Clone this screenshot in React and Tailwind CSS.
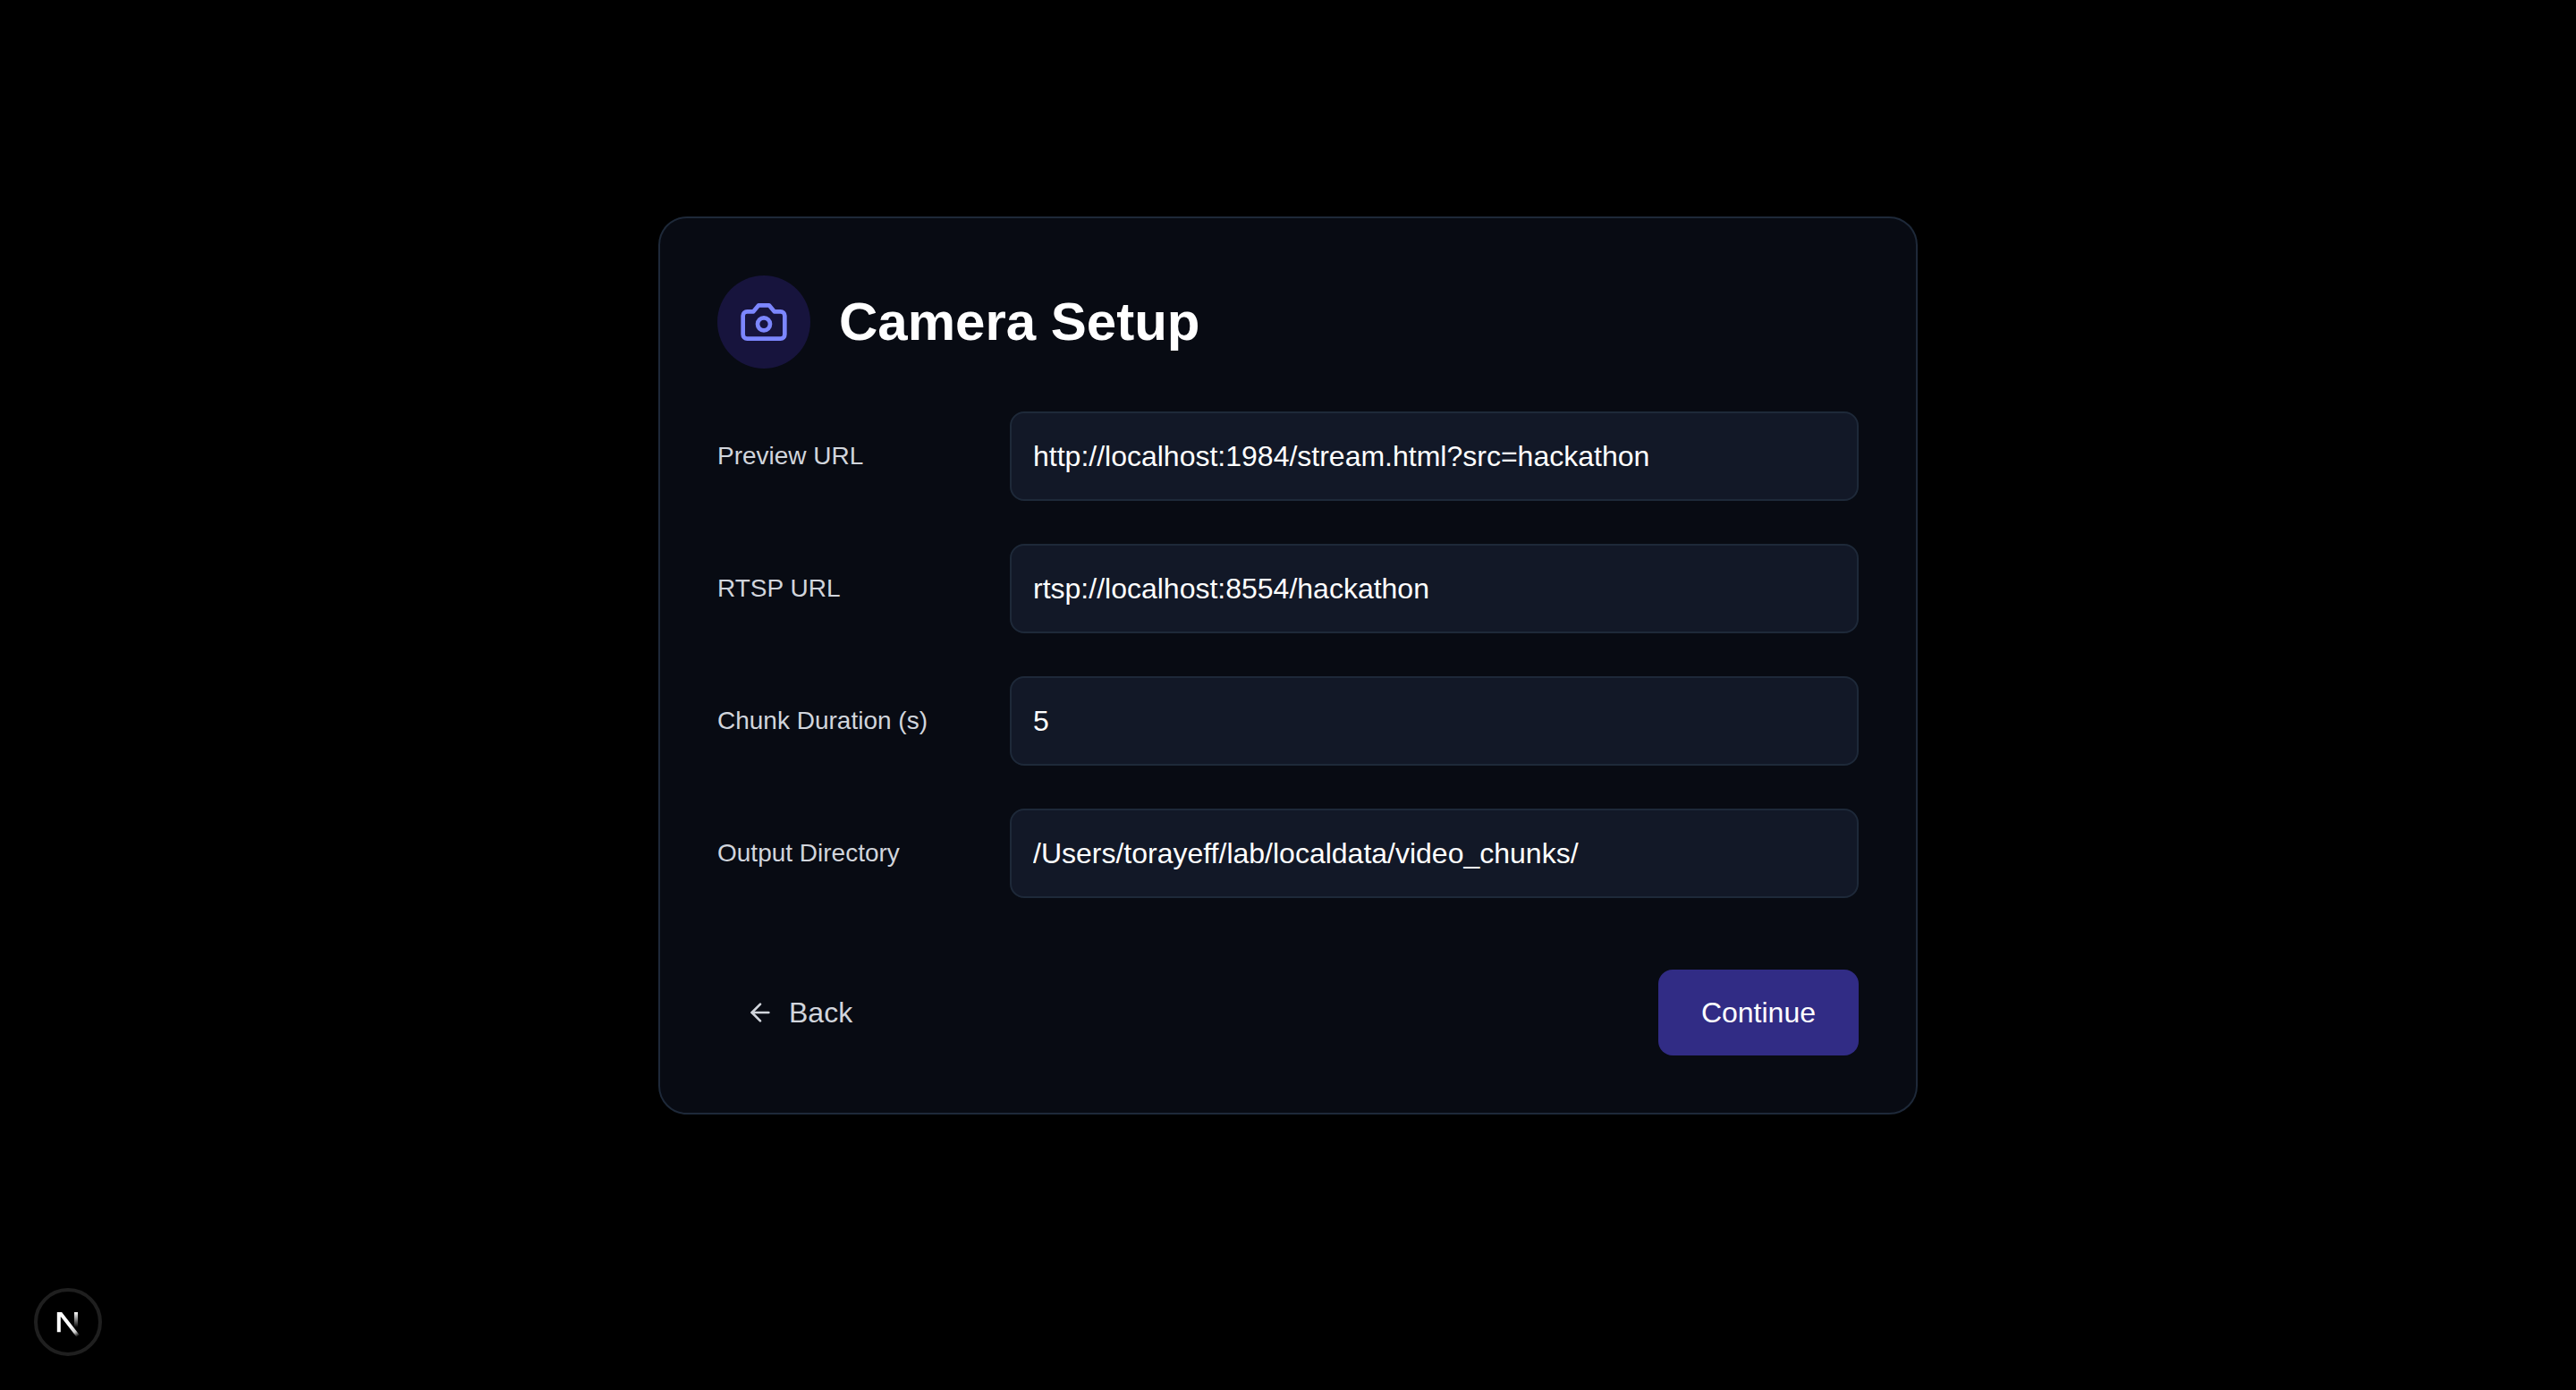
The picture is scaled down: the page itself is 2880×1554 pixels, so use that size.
import { ArrowLeft } from "lucide-react";

const fields = [
  { id: "preview-url", label: "Preview URL", value: "http://localhost:1984/stream.html?src=hackathon" },
  { id: "rtsp-url", label: "RTSP URL", value: "rtsp://localhost:8554/hackathon" },
  { id: "chunk-duration", label: "Chunk Duration (s)", value: "5" },
  { id: "output-directory", label: "Output Directory", value: "/Users/torayeff/lab/localdata/video_chunks/" },
];

function CameraIcon() {
  return (
    <svg
      className="size-14"
      viewBox="0 0 24 24"
      fill="none"
      stroke="currentColor"
      strokeWidth="2"
      strokeLinecap="round"
      strokeLinejoin="round"
      aria-hidden="true"
    >
      <path d="M14.5 4h-5L7 7H4a2 2 0 0 0-2 2v9a2 2 0 0 0 2 2h16a2 2 0 0 0 2-2V9a2 2 0 0 0-2-2h-3l-2.5-3z" />
      <circle cx="12" cy="13" r="3" />
    </svg>
  );
}

function NextMark() {
  return (
    <svg className="size-[68px]" viewBox="0 0 68 68" fill="none" aria-hidden="true">
      <defs>
        <linearGradient id="diagonal" x1="37" y1="38" x2="45" y2="50" gradientUnits="userSpaceOnUse">
          <stop stopColor="white" />
          <stop offset="0.6" stopColor="white" stopOpacity="0.8" />
          <stop offset="1" stopColor="white" stopOpacity="0" />
        </linearGradient>
        <linearGradient id="stem" x1="43" y1="23" x2="43" y2="40" gradientUnits="userSpaceOnUse">
          <stop stopColor="white" />
          <stop offset="1" stopColor="white" stopOpacity="0" />
        </linearGradient>
        <clipPath id="mark-bounds">
          <rect x="20" y="23" width="30" height="28" />
        </clipPath>
      </defs>
      <g clipPath="url(#mark-bounds)">
        <path d="M45.5 50 L23.8 22 V45.2" stroke="url(#diagonal)" strokeWidth="4" />
        <path d="M43 22 V46" stroke="url(#stem)" strokeWidth="4" />
      </g>
    </svg>
  );
}

export default function App() {
  return (
    <div className="flex min-h-screen items-center justify-center bg-black px-8 pb-[66px] font-['Liberation_Sans',Arial,sans-serif] text-white">
      <main className="w-full max-w-[1408px] rounded-[32px] border-2 border-gray-800 bg-[#080b13] p-16">
        <header className="flex items-center gap-8">
          <div className="rounded-full bg-[#17143d] p-6 text-indigo-400">
            <CameraIcon />
          </div>
          <h1 className="text-[60px] leading-[72px] font-bold">Camera Setup</h1>
        </header>

        <form className="mt-12" onSubmit={(e) => e.preventDefault()}>
          <div className="space-y-12">
            {fields.map((f) => (
              <div key={f.id} className="grid grid-cols-4 items-center gap-8">
                <label htmlFor={f.id} className="text-[28px] leading-10 text-gray-300">
                  {f.label}
                </label>
                <input
                  id={f.id}
                  type="text"
                  defaultValue={f.value}
                  className="col-span-3 h-[100px] w-full rounded-2xl border-2 border-gray-800 bg-[#121827] px-6 text-[32px] leading-[48px] text-white outline-none"
                />
              </div>
            ))}
          </div>

          <div className="mt-20 flex items-center justify-between">
            <button type="button" className="flex items-center gap-4 rounded-2xl px-8 py-6 text-[32px] leading-[48px] text-gray-300">
              <ArrowLeft className="size-8" />
              Back
            </button>
            <button type="submit" className="rounded-2xl bg-indigo-900 px-12 py-6 text-[32px] leading-[48px] text-white">
              Continue
            </button>
          </div>
        </form>
      </main>

      <button
        type="button"
        aria-label="Open developer tools"
        className="fixed bottom-[38px] left-[38px] rounded-full border-4 border-[#1f1f1f] bg-black"
      >
        <NextMark />
      </button>
    </div>
  );
}
